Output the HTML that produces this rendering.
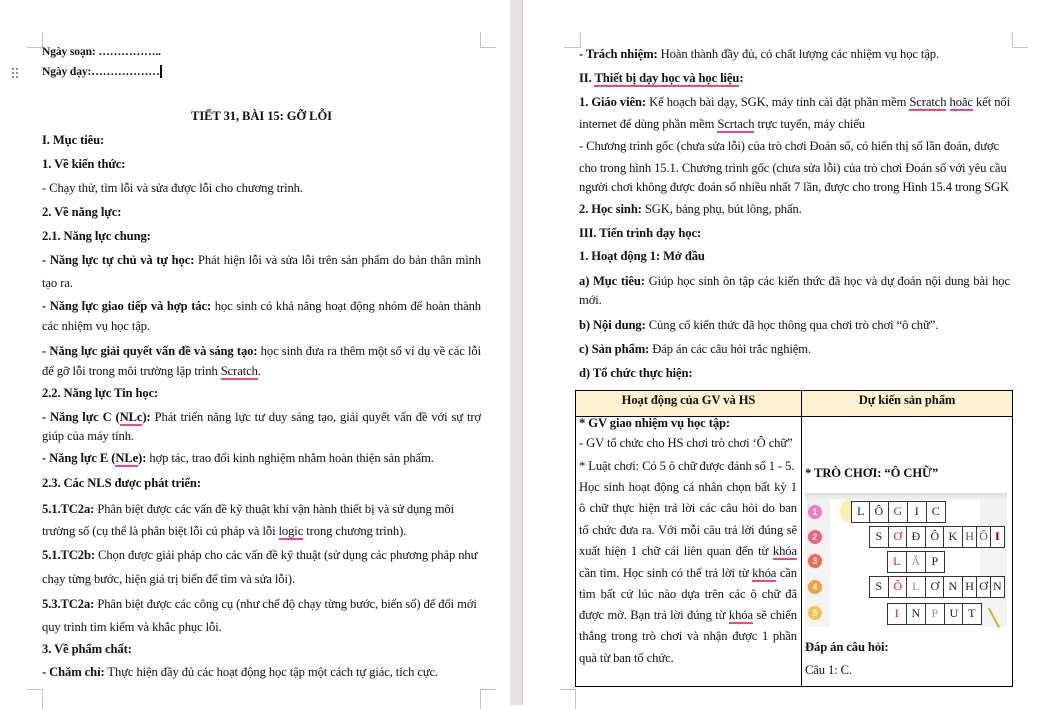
<!DOCTYPE html>
<html><head><meta charset="utf-8">
<style>
*{margin:0;padding:0;box-sizing:border-box}
body{width:1041px;height:705px;overflow:hidden;background:#fff;position:relative;font-family:"Liberation Serif","Noto Serif CJK SC",serif;font-size:12.6px;color:#111;letter-spacing:-0.1px}
.l{position:absolute;line-height:14px;white-space:nowrap}
.L{left:42px;width:439px}
.R{left:579px;width:431px}
.j{text-align:justify;text-align-last:justify;white-space:normal;height:17px;overflow:hidden}
b{font-weight:bold}
.u{border-bottom:2px solid #e64c7e;padding-bottom:0}
.mk{position:absolute;border-color:#c4c4c4;border-style:solid;border-width:0}
.cell{position:absolute;border:1.5px solid #333;background:#fff;font-size:12px;text-align:center;line-height:18px;color:#222}
.red{color:#e8141b}.gr{color:#999}
.c{position:absolute;width:14px;height:14px;border-radius:50%;color:#fff;font:bold 9px "Liberation Sans",sans-serif;text-align:center;line-height:14px}
</style></head><body>
<div style="position:absolute;left:510px;top:0;width:13px;height:705px;background:#e6e2e3;border-right:1px solid #cfcbcc"></div>
<div class="mk" style="left:27px;top:32px;width:16px;height:16px;border-right-width:1px;border-bottom-width:1px"></div>
<div class="mk" style="left:480px;top:32px;width:16px;height:16px;border-left-width:1px;border-bottom-width:1px"></div>
<div class="mk" style="left:564px;top:32px;width:17px;height:16px;border-right-width:1px;border-bottom-width:1px"></div>
<div class="mk" style="left:1012px;top:32px;width:16px;height:16px;border-left-width:1px;border-bottom-width:1px"></div>
<div class="mk" style="left:27px;top:689px;width:16px;height:20px;border-right-width:1px;border-top-width:1px"></div>
<div class="mk" style="left:480px;top:689px;width:16px;height:20px;border-left-width:1px;border-top-width:1px"></div>
<div class="mk" style="left:560px;top:689px;width:16px;height:20px;border-right-width:1px;border-top-width:1px"></div>
<div style="position:absolute;left:11px;top:67px;width:8px;height:12px;background-image:radial-gradient(circle,#888 1px,transparent 1.2px);background-size:4px 4px"></div>

<div class="l L" style="top:45px;font-size:11.5px"><b>Ngày soạn: ……………..</b></div>
<div class="l L" style="top:65px;font-size:11.5px"><b>Ngày dạy:………………</b><span style="display:inline-block;width:2px;height:13px;background:#000;vertical-align:-3px"></span></div>
<div class="l L" style="top:109px;text-align:center"><b>TIẾT 31, BÀI 15: GỠ LỖI</b></div>
<div class="l L" style="top:133px"><b>I. Mục tiêu:</b></div>
<div class="l L" style="top:157px"><b>1. Về kiến thức:</b></div>
<div class="l L" style="top:181px">- Chạy thử, tìm lỗi và sửa được lỗi cho chương trình.</div>
<div class="l L" style="top:205px"><b>2. Về năng lực:</b></div>
<div class="l L" style="top:229px"><b>2.1. Năng lực chung:</b></div>
<div class="l L j" style="top:253px"><b>- Năng lực tự chủ và tự học:</b> Phát hiện lỗi và sửa lỗi trên sản phẩm do bản thân mình</div>
<div class="l L" style="top:276px">tạo ra.</div>
<div class="l L j" style="top:299px"><b>- Năng lực giao tiếp và hợp tác:</b> học sinh có khả năng hoạt động nhóm để hoàn thành</div>
<div class="l L" style="top:319px">các nhiệm vụ học tập.</div>
<div class="l L j" style="top:344px"><b>- Năng lực giải quyết vấn đề và sáng tạo:</b> học sinh đưa ra thêm một số ví dụ về các lỗi</div>
<div class="l L" style="top:364px">để gỡ lỗi trong môi trường lập trình <span class="u">Scratch</span>.</div>
<div class="l L" style="top:386px"><b>2.2. Năng lực Tin học:</b></div>
<div class="l L j" style="top:410px"><b>- Năng lực C (<span class="u">NLc</span>):</b> Phát triển năng lực tư duy sáng tạo, giải quyết vấn đề với sự trợ</div>
<div class="l L" style="top:429px">giúp của máy tính.</div>
<div class="l L" style="top:451px"><b>- Năng lực E (<span class="u">NLe</span>):</b> hợp tác, trao đổi kinh nghiệm nhằm hoàn thiện sản phẩm.</div>
<div class="l L" style="top:476px"><b>2.3. Các NLS được phát triển:</b></div>
<div class="l L" style="top:502px"><b>5.1.TC2a:</b> Phân biệt được các vấn đề kỹ thuật khi vận hành thiết bị và sử dụng môi</div>
<div class="l L" style="top:524px">trường số (cụ thể là phân biệt lỗi cú pháp và lỗi <span class="u">logic</span> trong chương trình).</div>
<div class="l L" style="top:548px"><b>5.1.TC2b:</b> Chọn được giải pháp cho các vấn đề kỹ thuật (sử dụng các phương pháp như</div>
<div class="l L" style="top:572px">chạy từng bước, hiện giá trị biến để tìm và sửa lỗi).</div>
<div class="l L" style="top:597px"><b>5.3.TC2a:</b> Phân biệt được các công cụ (như chế độ chạy từng bước, biến số) để đổi mới</div>
<div class="l L" style="top:620px">quy trình tìm kiếm và khắc phục lỗi.</div>
<div class="l L" style="top:642px"><b>3. Về phẩm chất:</b></div>
<div class="l L" style="top:665px"><b>- Chăm chỉ:</b> Thực hiện đầy đủ các hoạt động học tập một cách tự giác, tích cực.</div>

<div class="l R" style="top:47px"><b>- Trách nhiệm:</b> Hoàn thành đầy đủ, có chất lượng các nhiệm vụ học tập.</div>
<div class="l R" style="top:71px"><b>II. <span class="u">Thiết bị dạy học và học liệu</span>:</b></div>
<div class="l R j" style="top:95px"><b>1. Giáo viên:</b> Kế hoạch bài dạy, SGK, máy tính cài đặt phần mềm <span class="u">Scratch</span> <span class="u">hoăc</span> kết nối</div>
<div class="l R" style="top:117px">internet để dùng phần mềm <span class="u">Scrtach</span> trực tuyến, máy chiếu</div>
<div class="l R" style="top:139px">- Chương trình gốc (chưa sửa lỗi) của trò chơi Đoán số, có hiển thị số lần đoán, được</div>
<div class="l R" style="top:161px">cho trong hình 15.1. Chương trình gốc (chưa sửa lỗi) của trò chơi Đoán số với yêu cầu</div>
<div class="l R" style="top:180px">người chơi không được đoán số nhiều nhất 7 lần, được cho trong Hình 15.4 trong SGK</div>
<div class="l R" style="top:202px"><b>2. Học sinh:</b> SGK, bảng phụ, bút lông, phấn.</div>
<div class="l R" style="top:226px"><b>III. Tiến trình dạy học:</b></div>
<div class="l R" style="top:249px"><b>1. Hoạt động 1: Mở đầu</b></div>
<div class="l R j" style="top:274px"><b>a) Mục tiêu:</b> Giúp học sinh ôn tập các kiến thức đã học và dự đoán nội dung bài học</div>
<div class="l R" style="top:293px">mới.</div>
<div class="l R" style="top:318px"><b>b) Nội dung:</b> Củng cố kiến thức đã học thông qua chơi trò chơi “ô chữ”.</div>
<div class="l R" style="top:342px"><b>c) Sản phẩm:</b> Đáp án các câu hỏi trắc nghiệm.</div>
<div class="l R" style="top:366px"><b>d) Tổ chức thực hiện:</b></div>

<div style="position:absolute;left:575px;top:390px;width:438px;height:297px;border:1px solid #000"></div>
<div style="position:absolute;left:576px;top:391px;width:436px;height:26px;background:#fdf1cf;border-bottom:1px solid #000"></div>
<div style="position:absolute;left:801px;top:390px;width:1px;height:297px;background:#000"></div>
<div class="l" style="left:576px;width:225px;top:393px;text-align:center"><b>Hoạt động của GV và HS</b></div>
<div class="l" style="left:802px;width:210px;top:393px;text-align:center"><b>Dự kiến sản phẩm</b></div>

<div class="l" style="left:579px;top:416px"><b>* GV giao nhiệm vụ học tập:</b></div>
<div class="l" style="left:579px;top:436px">- GV tổ chức cho HS chơi trò chơi ‘Ô chữ”</div>
<div class="l" style="left:579px;top:459px">* Luật chơi: Có 5 ô chữ được đánh số 1 - 5.</div>
<div class="l j" style="left:579px;width:218px;top:480px">Học sinh hoạt động cá nhân chọn bất kỳ 1</div>
<div class="l j" style="left:579px;width:218px;top:501px">ô chữ thực hiện trả lời các câu hỏi do ban</div>
<div class="l j" style="left:579px;width:218px;top:523px">tổ chức đưa ra. Với mỗi câu trả lời đúng sẽ</div>
<div class="l j" style="left:579px;width:218px;top:544px">xuất hiện 1 chữ cái liên quan đến từ <span class="u">khóa</span></div>
<div class="l j" style="left:579px;width:218px;top:566px">cần tìm. Học sinh có thể trả lời từ <span class="u">khóa</span> cần</div>
<div class="l j" style="left:579px;width:218px;top:587px">tìm bất cứ lúc nào dựa trên các ô chữ đã</div>
<div class="l j" style="left:579px;width:218px;top:608px">được mở. Bạn trả lời đúng từ <span class="u">khóa</span> sẽ chiến</div>
<div class="l j" style="left:579px;width:218px;top:629px">thắng trong trò chơi và nhận được 1 phần</div>
<div class="l" style="left:579px;top:651px">quà từ ban tổ chức.</div>

<div class="l" style="left:805px;top:466px"><b>* TRÒ CHƠI: “Ô CHỮ”</b></div>
<div style="position:absolute;left:805px;top:493px;width:202px;height:134px;background:linear-gradient(#dcdcdc,#f2f2f2 6px,#f4f4f4)"></div>
<div style="position:absolute;left:830px;top:500px;width:150px;height:127px;background:#fff"></div>
<div style="position:absolute;left:840px;top:500px;width:14px;height:22px;border-radius:50%;background:#f7f1b0"></div>
<div class="c" style="left:808px;top:505px;background:#f07cc8">1</div>
<div class="c" style="left:808px;top:530px;background:#f0607a">2</div>
<div class="c" style="left:808px;top:554px;background:#f06a50">3</div>
<div class="c" style="left:808px;top:580px;background:#f5a040">4</div>
<div class="c" style="left:808px;top:606px;background:#f2c54a">5</div>
<div style="position:absolute;left:993px;top:607px;width:1.5px;height:22px;background:#d8b020;transform:rotate(-28deg)"></div>
<div class="cell" style="left:851px;top:501px;width:19.5px;height:22px">L</div>
<div class="cell" style="left:869px;top:501px;width:19.5px;height:22px">Ô</div>
<div class="cell red" style="left:888px;top:501px;width:19.5px;height:22px">G</div>
<div class="cell" style="left:907px;top:501px;width:19.5px;height:22px">I</div>
<div class="cell" style="left:926px;top:501px;width:19.5px;height:22px">C</div>
<div class="cell" style="left:869px;top:526px;width:19.5px;height:22px">S</div>
<div class="cell red" style="left:888px;top:526px;width:19.5px;height:22px">Ơ</div>
<div class="cell" style="left:906px;top:526px;width:19.5px;height:22px">Đ</div>
<div class="cell" style="left:925px;top:526px;width:19.5px;height:22px">Ô</div>
<div class="cell" style="left:943px;top:526px;width:19.5px;height:22px">K</div>
<div class="cell" style="left:962px;top:526px;width:15px;height:22px;color:#555">H</div>
<div class="cell" style="left:976px;top:526px;width:15px;height:22px;color:#555">Ô</div>
<div class="cell" style="left:990px;top:526px;width:14.5px;height:22px;color:#800"><b>I</b></div>
<div class="cell red" style="left:887px;top:551px;width:19.5px;height:22px">L</div>
<div class="cell gr" style="left:906px;top:551px;width:19.5px;height:22px">Ă</div>
<div class="cell" style="left:925px;top:551px;width:19.5px;height:22px">P</div>
<div class="cell" style="left:869px;top:576px;width:19.5px;height:22px">S</div>
<div class="cell red" style="left:888px;top:576px;width:19.5px;height:22px">Ô</div>
<div class="cell gr" style="left:906px;top:576px;width:19.5px;height:22px">L</div>
<div class="cell" style="left:925px;top:576px;width:19.5px;height:22px">Ơ</div>
<div class="cell" style="left:943px;top:576px;width:19.5px;height:22px">N</div>
<div class="cell" style="left:962px;top:576px;width:15px;height:22px">H</div>
<div class="cell" style="left:976px;top:576px;width:15px;height:22px">Ơ</div>
<div class="cell" style="left:990px;top:576px;width:14.5px;height:22px">N</div>
<div class="cell red" style="left:887px;top:603px;width:19.5px;height:22px">I</div>
<div class="cell" style="left:906px;top:603px;width:19.5px;height:22px">N</div>
<div class="cell gr" style="left:925px;top:603px;width:19.5px;height:22px">P</div>
<div class="cell" style="left:944px;top:603px;width:19.5px;height:22px">U</div>
<div class="cell" style="left:962px;top:603px;width:19.5px;height:22px">T</div>

<div class="l" style="left:805px;top:640px"><b>Đáp án câu hỏi:</b></div>
<div class="l" style="left:805px;top:663px">Câu 1: C.</div>
</body></html>
